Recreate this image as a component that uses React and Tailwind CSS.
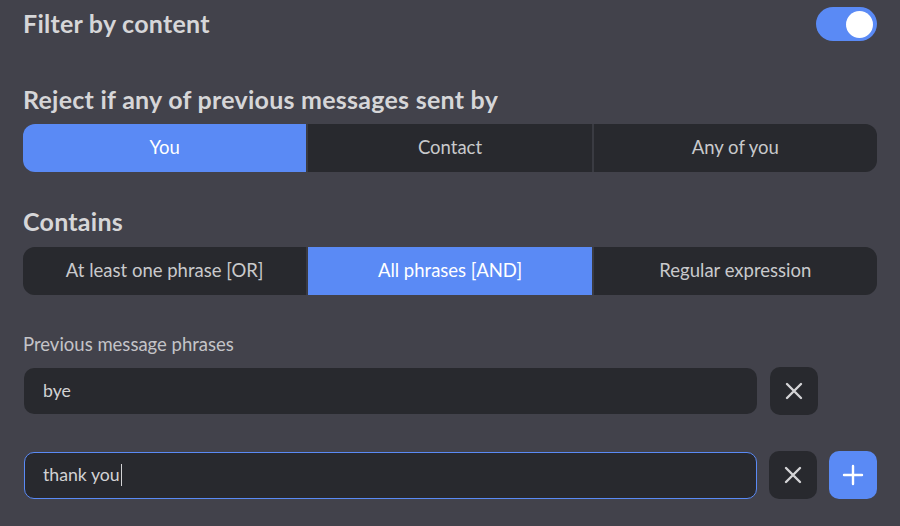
import React from "react";

const font = { fontFamily: "Lato, 'Noto Sans', sans-serif" };

function Segmented({ options, active }) {
  return (
    <div className="flex h-12 rounded-xl overflow-hidden bg-[#3a3b42] gap-[2px]">
      {options.map((o, i) => (
        <div
          key={o}
          className={
            "flex-1 flex items-center justify-center text-[18.5px] " +
            (i === active ? "bg-[#5a8af5] text-white" : "bg-[#28292e] text-[#c9c9cc]")
          }
        >
          {o}
        </div>
      ))}
    </div>
  );
}

function XIcon() {
  return (
    <svg width="20" height="20" viewBox="0 0 20 20" fill="none">
      <path d="M3 3L17 17M17 3L3 17" stroke="#d4d4d6" strokeWidth="2.4" strokeLinecap="round" />
    </svg>
  );
}

function PlusIcon() {
  return (
    <svg width="22" height="22" viewBox="0 0 22 22" fill="none">
      <path d="M11 2V20M2 11H20" stroke="#ffffff" strokeWidth="2.4" strokeLinecap="round" />
    </svg>
  );
}

export default function App() {
  return (
    <div className="w-[900px] h-[526px] bg-[#42424b] overflow-hidden" style={font}>
      <div className="px-[23px] pt-[7px]">
        <div className="flex items-center justify-between h-[34px]">
          <div className="text-[25px] font-bold tracking-[0.25px] text-[#d6d6d8]">Filter by content</div>
          <div className="w-[61px] h-[34px] rounded-full bg-[#5a8af5] flex items-center justify-end pr-[4px]">
            <div className="w-[27px] h-[27px] rounded-full bg-white" />
          </div>
        </div>
        <div className="mt-[42px] text-[25px] font-bold tracking-[0.25px] text-[#d6d6d8] h-[34px] flex items-center">
          Reject if any of previous messages sent by
        </div>
        <div className="mt-[7px]">
          <Segmented options={["You", "Contact", "Any of you"]} active={0} />
        </div>
        <div className="mt-[33px] text-[25px] font-bold tracking-[0.25px] text-[#d6d6d8] h-[34px] flex items-center">
          Contains
        </div>
        <div className="mt-[8px]">
          <Segmented options={["At least one phrase [OR]", "All phrases [AND]", "Regular expression"]} active={1} />
        </div>
        <div className="mt-[37px] text-[18.5px] text-[#c4c4c8] leading-[24px]">Previous message phrases</div>
        <div className="mt-[11px] flex items-center gap-[13px]">
          <div className="w-[733px] ml-[1px] h-[46px] rounded-[10px] bg-[#28292e] flex items-center pl-[19px] text-[17.7px] text-[#d2d2d4]">
            bye
          </div>
          <div className="w-12 h-12 rounded-[10px] bg-[#28292e] flex items-center justify-center">
            <XIcon />
          </div>
        </div>
        <div className="mt-[36px] flex items-center gap-[12px]">
          <div className="w-[734px] ml-[1px] h-[47px] rounded-[10px] bg-[#28292e] border border-[#5a8af5] flex items-center pl-[18px] text-[17.7px] text-[#d2d2d4]">
            <span>thank you</span>
            <span className="inline-block w-[1px] h-[22px] bg-[#d2d2d4] ml-[1px]" />
          </div>
          <div className="w-12 h-12 rounded-[10px] bg-[#28292e] flex items-center justify-center">
            <XIcon />
          </div>
          <div className="w-12 h-12 rounded-[10px] bg-[#5a8af5] flex items-center justify-center">
            <PlusIcon />
          </div>
        </div>
      </div>
    </div>
  );
}
